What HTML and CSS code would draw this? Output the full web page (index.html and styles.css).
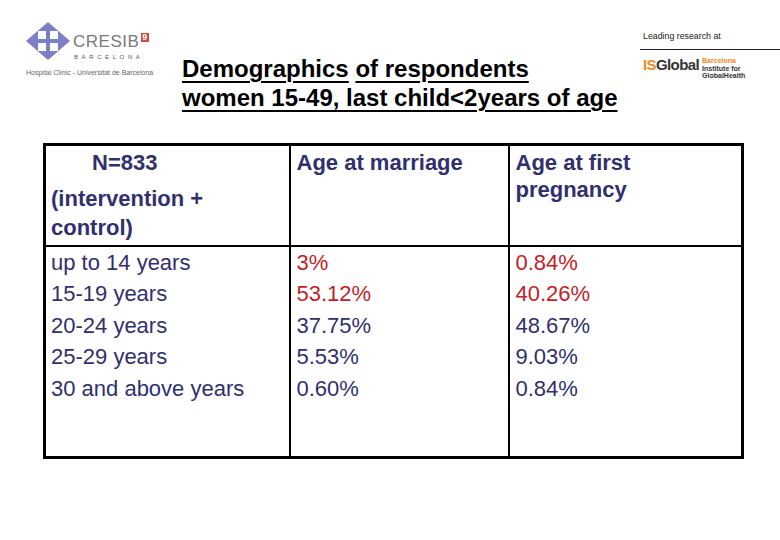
FILE: index.html
```html
<!DOCTYPE html>
<html>
<head>
<meta charset="utf-8">
<link rel="stylesheet" href="styles.css">
</head>
<body>
<div class="page">
  <header class="top">
    <div class="cresib">
      <div class="cresib-main">
        <svg class="diamond" width="44" height="38" viewBox="0 0 44 38">
          <polygon points="22,0 44,19 22,38 0,19" fill="#7c80c6"/>
          <rect x="12" y="9" width="8" height="8" fill="#fff"/>
          <rect x="24" y="9" width="8" height="8" fill="#fff"/>
          <rect x="12" y="21" width="8" height="8" fill="#fff"/>
          <rect x="24" y="21" width="8" height="8" fill="#fff"/>
        </svg>
        <div class="cresib-text">
          <div class="cresib-name">CRESIB<span class="cresib-mark">9</span></div>
          <div class="cresib-city">BARCELONA</div>
        </div>
      </div>
      <div class="cresib-sub">Hospital Clínic - Universitat de Barcelona</div>
    </div>
    <h1 class="title">
      <span class="u">Demographics</span> <span class="u">of respondents</span><br>
      <span class="u">women 15-49, last child&lt;2years of age</span>
    </h1>
    <div class="isg">
      <div class="lead">Leading research at</div>
      <div class="isg-logo">
        <span class="isg-word"><span class="isg-is">IS</span>Global</span>
        <span class="isg-small"><span class="isg-bcn">Barcelona</span><span>Institute for</span><span>GlobalHealth</span></span>
      </div>
    </div>
  </header>

  <table class="data">
    <colgroup>
      <col class="c1"><col class="c2"><col class="c3">
    </colgroup>
    <tr class="head">
      <td><div class="n">N=833</div><div class="grp">(intervention +<br>control)</div></td>
      <td>Age at marriage</td>
      <td>Age at first<br>pregnancy</td>
    </tr>
    <tr class="body">
      <td>up to 14 years<br>15-19 years<br>20-24 years<br>25-29 years<br>30 and above years</td>
      <td><span class="red">3%<br>53.12%</span><br>37.75%<br>5.53%<br>0.60%</td>
      <td><span class="red">0.84%<br>40.26%</span><br>48.67%<br>9.03%<br>0.84%</td>
    </tr>
  </table>
</div>
</body>
</html>
```

FILE: styles.css
```css
* { box-sizing: border-box; }
html, body { margin: 0; padding: 0; background: #fff; }
body { font-family: "Liberation Sans", Arial, sans-serif; width: 780px; height: 540px; overflow: hidden; }

.page { width: 780px; }

.top {
  display: grid;
  grid-template-columns: 182px 458px 140px;
  height: 143px;
}

.cresib { padding: 22px 0 0 26px; }
.cresib-main { display: flex; align-items: flex-start; gap: 3px; }
.diamond { display: block; }
.cresib-text { padding-top: 12px; }
.cresib-name {
  font-size: 17px;
  line-height: 16px;
  color: #7a7a7a;
  letter-spacing: 0.5px;
}
.cresib-mark {
  display: inline-block;
  font-size: 9px;
  line-height: 9px;
  font-weight: bold;
  color: #fff;
  background: #d9463a;
  vertical-align: top;
  padding: 0 1px;
  margin-left: 2px;
  margin-top: -1px;
}
.cresib-city {
  font-size: 6px;
  letter-spacing: 3.6px;
  color: #555;
  margin-top: 4px;
  margin-left: 1px;
}
.cresib-sub {
  font-size: 7px;
  color: #666;
  margin-top: 9px;
  white-space: nowrap;
}

.title {
  margin: 54px 0 0 0;
  font-size: 24px;
  line-height: 29px;
  font-weight: bold;
  color: #000;
  white-space: nowrap;
}
.title .u { text-decoration: underline; text-decoration-thickness: 2px; text-underline-offset: 4px; }

.isg { padding-top: 31px; }
.lead { font-size: 8.8px; color: #222; padding-left: 3px; line-height: 11px; }
.isg-logo {
  border-top: 1px solid #222;
  margin-top: 7px;
  padding: 7px 0 0 3px;
  display: flex;
  align-items: flex-start;
  gap: 3px;
}
.isg-word {
  font-size: 15px;
  font-weight: bold;
  color: #333;
  letter-spacing: -0.6px;
  line-height: 15px;
}
.isg-is { color: #f08a1d; }
.isg-small {
  display: flex;
  flex-direction: column;
  font-size: 7px;
  line-height: 7.5px;
  font-weight: bold;
  color: #333;
}
.isg-bcn { color: #f08a1d; }

.data {
  margin-left: 43px;
  border-collapse: collapse;
  border: 3px solid #000;
  width: 698px;
  table-layout: fixed;
  font-size: 22px;
  color: #30306e;
}
.c1 { width: 245px; }
.c2 { width: 219px; }
.c3 { width: 234px; }
.data td {
  border: 2px solid #000;
  vertical-align: top;
  padding: 3px 4px 0 6px;
}
.head td {
  height: 101px;
  font-weight: bold;
  line-height: 27px;
}
.head td:first-child { padding-top: 2px; padding-left: 5px; }
.head .n { padding-left: 41px; line-height: 30px; margin-bottom: 6px; }
.head .grp { line-height: 29px; }
.body td {
  height: 212px;
  line-height: 31.5px;
  padding-top: 0;
}
.body td:first-child { padding-left: 5px; }
.red { color: #c41e25; }
```
